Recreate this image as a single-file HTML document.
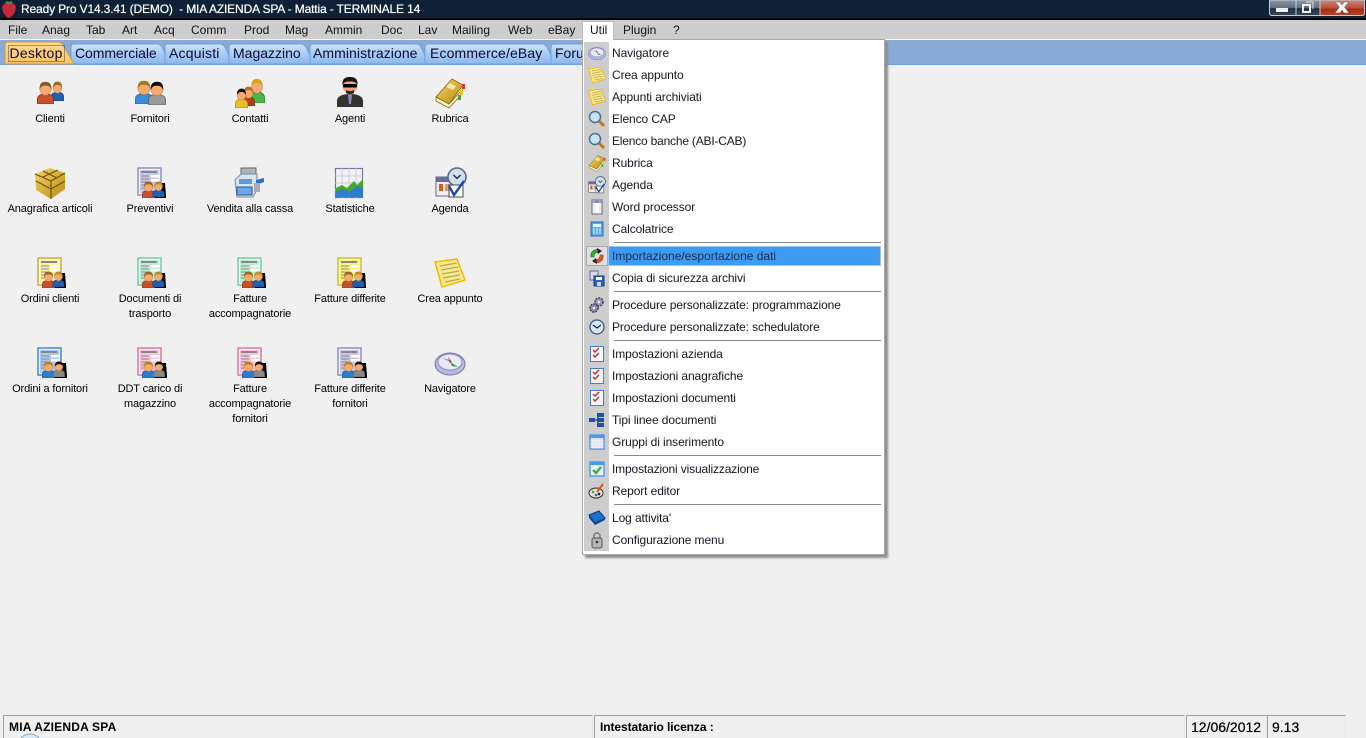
<!DOCTYPE html>
<html lang="it"><head><meta charset="utf-8"><title>Ready Pro</title>
<style>
html,body{margin:0;padding:0;width:1366px;height:738px;overflow:hidden;background:#f0f0f0}
body{font-family:"Liberation Sans",sans-serif;font-size:12px;color:#000;position:relative}
div,span,svg{position:absolute}
.t{white-space:pre}
#title{left:0;top:0;width:1366px;height:18px;background:#0e2136}
#title .t{left:21px;top:2px;color:#fff;font-size:12px;line-height:15px;font-weight:400;letter-spacing:-.145px;text-shadow:0 0 .6px #fff}
#line{left:0;top:18px;width:1366px;height:2px;background:#000}
#menu{left:0;top:20px;width:1366px;height:19px;background:#cdcdcd}
#menu .t{top:3px;line-height:14px;color:#111}
#wl{left:0;top:39px;width:1366px;height:1px;background:#f4f6f8}
#tabs{left:0;top:40px;width:1366px;height:24px;background:#89a9d7}
#bl{left:0;top:64px;width:1366px;height:1px;background:#6f9fdd}
.tl{top:45px;font-size:14px;line-height:17px;color:#0c0c2a}
.lab{width:100px;text-align:center;font-size:11px;line-height:15px;color:#000;letter-spacing:-.14px}
.ico{width:32px;height:32px}
#pop{left:582px;top:39px;width:301px;height:514px;background:#fff;border:1px solid #a8a8a8;box-shadow:3px 3px 2px #8e8e8e}
#gut{left:584px;top:42px;width:25px;height:509px;background:#cdcdcd}
.mi{left:612px;line-height:14px;color:#15151f;letter-spacing:-.1px;white-space:pre}
.sep{left:614px;width:267px;height:1px;background:#8a8a8a}
.mic{left:588px;width:18px;height:18px}
.sb{top:715px;height:23px;border-top:1px solid #a0a0a0;border-left:1px solid #a0a0a0;border-right:1px solid #e6e6e6}
.sbt{top:720px;line-height:14px;white-space:pre;color:#000}
</style></head><body>
<svg width="0" height="0" style="left:0;top:0">
<defs>
<linearGradient id="gold" x1="0" y1="0" x2="1" y2="1"><stop offset="0" stop-color="#f5d560"/><stop offset="1" stop-color="#b98a12"/></linearGradient>
<linearGradient id="tabg" x1="0" y1="0" x2="0" y2="1"><stop offset="0" stop-color="#cfe3fb"/><stop offset=".45" stop-color="#a9ccf6"/><stop offset="1" stop-color="#8fb8ee"/></linearGradient>
<linearGradient id="tabo" x1="0" y1="0" x2="0" y2="1"><stop offset="0" stop-color="#ffd88f"/><stop offset="1" stop-color="#ffc465"/></linearGradient>
<symbol id="man" viewBox="0 0 20 24" preserveAspectRatio="none"><path d="M.5 24V19C.5 15 5 13.500 10 13.500s9.500 1.500 9.500 5.500v5z" fill="var(--s,#c8502a)" stroke="var(--d,#7a2a12)" stroke-width=".8"/><circle cx="10" cy="8" r="6.800" fill="#f5ab70" stroke="#a86a32" stroke-width=".5"/><path d="M3.200 9C2.500 2.500 6 .8 10 .8S17.500 2.500 16.800 9C15.500 5.500 13 4.800 10 4.800S4.500 5.500 3.200 9z" fill="var(--h,#b87a2a)"/></symbol>
<symbol id="doc" viewBox="0 0 32 32"><rect x="1" y="1" width="23" height="27" fill="#f4f4ee" stroke="var(--b)" stroke-width="1.400"/><rect x="3" y="3" width="19" height="23" fill="var(--l)"/><rect x="4" y="4" width="16" height="2" fill="#888"/><path d="M4 9h8M4 12h8M4 15h6M4 18h4M4 21h3" stroke="#888" stroke-width="1"/><rect x="14" y="8" width="8" height="2.500" fill="#fff"/><rect x="14" y="12" width="8" height="2.500" fill="#fff"/></symbol>
<symbol id="d1" viewBox="0 0 32 32"><use href="#doc" width="32" height="32"/><path d="M24 16h4l1 13v2H17v-3z" fill="#000"/><use href="#man" x="5" y="14" width="13" height="17" style="--s:#c8502a;--h:#9a6a22"/><use href="#man" x="15.500" y="14" width="12" height="16" style="--s:#1c62b4;--d:#0d3a78;--h:#b88a2a"/></symbol>
<symbol id="d2" viewBox="0 0 32 32"><use href="#doc" width="32" height="32"/><path d="M24 16h5l1 13v2H17v-3z" fill="#000"/><use href="#man" x="5" y="14" width="13" height="17" style="--s:#2a7ed0;--d:#124a88;--h:#b8801e"/><use href="#man" x="16" y="14" width="12" height="16" style="--s:#8a8a8a;--d:#555;--h:#151515"/></symbol>
<symbol id="book" viewBox="0 0 32 32"><path d="M2 20L15 27 28 13 28 17 15 31 2 24z" fill="#fff3cc" stroke="#8a6410" stroke-width=".8"/><path d="M2 20L18 2 29 8 15 27z" fill="url(#gold)" stroke="#8a6410" stroke-width=".8"/><path d="M15 6l7 3-3 4-7-3z" fill="#f3e6ac"/><rect x="28" y="7" width="3" height="5" fill="#e23a20"/><rect x="26" y="13" width="3" height="5" fill="#e8c820"/><rect x="24" y="18" width="3" height="5" fill="#4aa83a"/></symbol>
<symbol id="note" viewBox="0 0 32 32"><path d="M1 5L23 2 31 23 8 30z" fill="#fbe98a" stroke="#f0b400" stroke-width="1.400"/><path d="M6 9l17-3M7 13l17-3M8 17l17-3M9 21l17-3M11 25l15-3" stroke="#b8a45a" stroke-width="1.300"/></symbol>
<symbol id="comp" viewBox="0 0 32 32"><ellipse cx="16" cy="17" rx="15" ry="11" fill="#b8b8e4" stroke="#7474b0"/><ellipse cx="16" cy="15" rx="12" ry="8" fill="#e8e8f6" stroke="#8c8cc4"/><path d="M8 11L17 15 15 13z" fill="#3a6ac0"/><path d="M14 10l4 5-2 1z" fill="#d8402a"/><path d="M16 15l8 5-6-1z" fill="#3a9a4a"/></symbol>
<symbol id="zoom" viewBox="0 0 18 18"><path d="M10 10l6 6" stroke="#c87818" stroke-width="3"/><circle cx="7" cy="7" r="5.500" fill="#c8e4f8" stroke="#47708f" stroke-width="1.500"/></symbol>
<symbol id="chk" viewBox="0 0 18 18"><rect x="2.500" y="1.500" width="13" height="15" fill="#f6f6fa" stroke="#4a7ac8"/><path d="M5 5l2 2 4-4M5 10l2 2 4-4" fill="none" stroke="#c82a20" stroke-width="1.400"/></symbol>
<symbol id="agenda" viewBox="0 0 32 32"><rect x="1" y="10" width="19" height="19" fill="#eef" stroke="#667"/><rect x="1" y="10" width="19" height="5" fill="#6a6aa4"/><rect x="4" y="17" width="4" height="7" fill="#d8601a"/><rect x="10" y="17" width="5" height="7" fill="#e89a5a"/><circle cx="22" cy="10" r="9" fill="#cfe0f0" stroke="#5a6a8a" stroke-width="1.600"/><path d="M18.500 8l3.500 3.500L25.500 8" fill="none" stroke="#223" stroke-width="1.300"/><rect x="14" y="18" width="14" height="12" fill="#fff" stroke="#445"/><path d="M14 19l5 9 10-14" fill="none" stroke="#1c4ab0" stroke-width="2.400"/></symbol>
</defs></svg>

<div id="title"><span class="t">Ready Pro V14.3.41 (DEMO)  - MIA AZIENDA SPA - Mattia - TERMINALE 14</span></div>
<svg style="left:1px;top:0" width="16" height="18" viewBox="0 0 16 18"><path d="M8 18C3 16 .5 10 1.500 6 2.500 3 6 3 8 4c2-1 5.500-1 6.500 2 1 4-1.500 10-6.500 12z" fill="#c8283a"/><path d="M4 3l4 1 4-1-2-2-2 1-2-1z" fill="#4a9a3a"/></svg>

<svg style="left:1269px;top:0" width="96" height="17" viewBox="0 0 96 17">
<defs><linearGradient id="bg" x1="0" y1="0" x2="0" y2="1"><stop offset="0" stop-color="#8a97a4"/><stop offset=".5" stop-color="#5f6e7e"/><stop offset=".55" stop-color="#22303f"/><stop offset="1" stop-color="#34485a"/></linearGradient>
<linearGradient id="rg" x1="0" y1="0" x2="0" y2="1"><stop offset="0" stop-color="#c88a80"/><stop offset=".5" stop-color="#b8503c"/><stop offset=".6" stop-color="#b02810"/><stop offset="1" stop-color="#a84a30"/></linearGradient></defs>
<path d="M.5 0V13q0 2.500 2.500 2.500H51V0z" fill="url(#bg)" stroke="#c8ccd0"/>
<path d="M51 0H95.500V13q0 2.500-2.500 2.500H51z" fill="url(#rg)" stroke="#c8ccd0"/>
<line x1="27" y1="0" x2="27" y2="15" stroke="#c8ccd0"/>
<rect x="7" y="8" width="12" height="4" fill="#f0f0f0"/>
<rect x="34" y="5" width="7" height="7" fill="none" stroke="#f0f0f0" stroke-width="2"/><path d="M37 2h7v7" fill="none" stroke="#dde" stroke-width="1"/>
<path d="M66 2l5 0 2 3 2-3 5 0-4.500 5 4.500 6-5 0-2-3-2 3-5 0 4.500-6z" fill="#f2f2f2" stroke="#666" stroke-width=".5"/>
</svg>
<div id="line"></div>

<div id="menu">
<span class="t" style="left:8px">File</span><span class="t" style="left:42px">Anag</span><span class="t" style="left:86px">Tab</span><span class="t" style="left:122px">Art</span><span class="t" style="left:154px">Acq</span><span class="t" style="left:191px">Comm</span><span class="t" style="left:244px">Prod</span><span class="t" style="left:285px">Mag</span><span class="t" style="left:325px">Ammin</span><span class="t" style="left:381px">Doc</span><span class="t" style="left:418px">Lav</span><span class="t" style="left:452px">Mailing</span><span class="t" style="left:508px">Web</span><span class="t" style="left:548px">eBay</span><span class="t" style="left:623px">Plugin</span><span class="t" style="left:673px">?</span>
</div>
<div id="wl"></div>
<div id="tabs"></div><div id="bl"></div>

<svg style="left:0;top:40px" width="600" height="25" viewBox="0 0 600 25">
<path d="M71 24V7q0-3 3-3h83q3 0 5 3l8 17z" fill="url(#tabg)" stroke="#6f9fdd"/>
<path d="M165 24V7q0-3 3-3h52q3 0 5 3l8 17z" fill="url(#tabg)" stroke="#6f9fdd"/>
<path d="M229 24V7q0-3 3-3h69q3 0 5 3l8 17z" fill="url(#tabg)" stroke="#6f9fdd"/>
<path d="M310 24V7q0-3 3-3h103q3 0 5 3l8 17z" fill="url(#tabg)" stroke="#6f9fdd"/>
<path d="M425 24V7q0-3 3-3h114q3 0 5 3l8 17z" fill="url(#tabg)" stroke="#6f9fdd"/>
<path d="M551 24V7q0-3 3-3h40v20z" fill="url(#tabg)" stroke="#6f9fdd"/>
<path d="M5 24V5q0-3 3-3h50q3 0 5 3l11 19z" fill="url(#tabo)" stroke="#c89a50"/>
<rect x="8.500" y="5.500" width="56" height="16" fill="none" stroke="#444" stroke-dasharray="1 1"/>
</svg>
<span class="tl t" style="left:9.500px;letter-spacing:.25px">Desktop</span><span class="tl t" style="left:75px;letter-spacing:-.08px">Commerciale</span><span class="tl t" style="left:169px;letter-spacing:.2px">Acquisti</span><span class="tl t" style="left:233px">Magazzino</span><span class="tl t" style="left:313px;letter-spacing:.07px">Amministrazione</span><span class="tl t" style="left:430px;letter-spacing:.14px">Ecommerce/eBay</span><span class="tl t" style="left:555px">Forum</span>

<!-- Row 1 -->
<svg class="ico" style="left:36px;top:77px" viewBox="0 0 32 32"><use href="#man" x="15" y="4" width="13" height="20" style="--s:#1c62b4;--d:#0d3a78;--h:#9a6a22"/><use href="#man" x="1" y="4" width="17" height="23" style="--s:#c8502a;--h:#8a5a1e"/></svg>
<svg class="ico" style="left:134px;top:77px" viewBox="0 0 32 32"><use href="#man" x="1" y="3" width="18" height="24" style="--s:#3a8ed8;--d:#1c5a9a;--h:#a8781e"/><use href="#man" x="14" y="4" width="18" height="24" style="--s:#9a9a9a;--d:#555;--h:#101010"/></svg>
<svg class="ico" style="left:234px;top:76px" viewBox="0 0 32 32"><use href="#man" x="15" y="2" width="16" height="25" style="--s:#48b848;--d:#227a22;--h:#d8a020"/><use href="#man" x="8" y="10" width="13" height="20" style="--s:#b83a1e;--h:#a8781e"/><use href="#man" x="1" y="12" width="13" height="20" style="--s:#e8c020;--d:#987a10;--h:#101010"/></svg>
<svg class="ico" style="left:334px;top:76px" viewBox="0 0 32 32"><path d="M3 31v-6c0-5 6-7 13-7s13 2 13 7v6z" fill="#333"/><path d="M14 18h4l-1 10h-2z" fill="#8a8ac0"/><circle cx="16" cy="10" r="7.500" fill="#f2a878"/><path d="M8.500 9C8 2 12 1 16 1s8 1 7.500 8C22 6 20 5.500 16 5.500S10 6 8.500 9z" fill="#181818"/><rect x="9" y="8" width="14" height="3.500" rx="1" fill="#000"/><path d="M12 14q4 2 8 0v3q-4 3-8 0z" fill="#3a2a1a"/></svg>
<svg class="ico" style="left:434px;top:77px"><use href="#book" width="32" height="32"/></svg>
<!-- Row 2 -->
<svg class="ico" style="left:34px;top:167px" viewBox="0 0 32 32"><path d="M1 7L16 1l15 5v16L17 32 2 23z" fill="url(#gold)"/><path d="M1 7l16 7 14-8M17 14v18M9 4l14 7M2 14l15 8 14-8M24 3L9 10" fill="none" stroke="#6a4e10" stroke-width="1.100"/></svg>
<svg class="ico" style="left:137px;top:167px"><use href="#d1" width="32" height="32" style="--b:#8a8ac0;--l:#c8c8ec"/></svg>
<svg class="ico" style="left:234px;top:167px" viewBox="0 0 32 32"><rect x="7" y="1" width="15" height="7" fill="#b4b4b4" stroke="#666"/><path d="M1 13l6-6h16v16l-4 7H3z" fill="#d8e4f0" stroke="#7a8a9a"/><path d="M5 12h13v5H5z" fill="#5a9ad8"/><path d="M3 20h15v8H3z" fill="#6aa8e8" stroke="#2a5a9a"/><path d="M22 13l8-2v4l-8 3z" fill="#2a72c0"/><rect x="20" y="16" width="6" height="9" fill="#aab"/></svg>
<svg class="ico" style="left:334px;top:167px" viewBox="0 0 32 32"><rect x="1.500" y="1.500" width="27" height="29" fill="#f2f2f2" stroke="#7474a4" stroke-width="1.200"/><path d="M1 9h28M1 16h28M1 23h28M8 1v30M15 1v30M22 1v30" stroke="#c4c4d4" stroke-width=".8"/><path d="M2 30V21l6-3 5 3 7-7 3 4 6-6v18z" fill="#42a832"/><path d="M2 30v-5l7-3 7 3 7-6 6 2v9z" fill="#2e7cd0"/></svg>
<svg class="ico" style="left:435px;top:167px"><use href="#agenda" width="32" height="32"/></svg>
<!-- Row 3 -->
<svg class="ico" style="left:37px;top:257px"><use href="#d1" width="32" height="32" style="--b:#c8a838;--l:#fdf2a8"/></svg>
<svg class="ico" style="left:137px;top:257px"><use href="#d1" width="32" height="32" style="--b:#72c8a0;--l:#bdeed4"/></svg>
<svg class="ico" style="left:237px;top:257px"><use href="#d1" width="32" height="32" style="--b:#72c8a0;--l:#bdeed4"/></svg>
<svg class="ico" style="left:337px;top:257px"><use href="#d1" width="32" height="32" style="--b:#c8c020;--l:#fbf47a"/></svg>
<svg class="ico" style="left:434px;top:257px"><use href="#note" width="32" height="32"/></svg>
<!-- Row 4 -->
<svg class="ico" style="left:37px;top:347px"><use href="#d2" width="32" height="32" style="--b:#3a7ae8;--l:#a8c8fa"/></svg>
<svg class="ico" style="left:137px;top:347px"><use href="#d2" width="32" height="32" style="--b:#d870a0;--l:#f8c4dc"/></svg>
<svg class="ico" style="left:237px;top:347px"><use href="#d2" width="32" height="32" style="--b:#d870a0;--l:#f8c4dc"/></svg>
<svg class="ico" style="left:337px;top:347px"><use href="#d2" width="32" height="32" style="--b:#8a8ac0;--l:#c8c8ec"/></svg>
<svg class="ico" style="left:434px;top:347px"><use href="#comp" width="32" height="32"/></svg>

<div class="lab" style="left:0;top:112px">Clienti</div><div class="lab" style="left:100px;top:112px">Fornitori</div><div class="lab" style="left:200px;top:112px">Contatti</div><div class="lab" style="left:300px;top:112px">Agenti</div><div class="lab" style="left:400px;top:112px">Rubrica</div>
<div class="lab" style="left:0;top:202px">Anagrafica articoli</div><div class="lab" style="left:100px;top:202px">Preventivi</div><div class="lab" style="left:200px;top:202px">Vendita alla cassa</div><div class="lab" style="left:300px;top:202px">Statistiche</div><div class="lab" style="left:400px;top:202px">Agenda</div>
<div class="lab" style="left:0;top:292px">Ordini clienti</div><div class="lab" style="left:100px;top:292px">Documenti di<br>trasporto</div><div class="lab" style="left:200px;top:292px">Fatture<br>accompagnatorie</div><div class="lab" style="left:300px;top:292px">Fatture differite</div><div class="lab" style="left:400px;top:292px">Crea appunto</div>
<div class="lab" style="left:0;top:382px">Ordini a fornitori</div><div class="lab" style="left:100px;top:382px">DDT carico di<br>magazzino</div><div class="lab" style="left:200px;top:382px">Fatture<br>accompagnatorie<br>fornitori</div><div class="lab" style="left:300px;top:382px">Fatture differite<br>fornitori</div><div class="lab" style="left:400px;top:382px">Navigatore</div>

<!-- Util popup -->
<div id="pop"></div><div id="gut"></div>
<div style="left:582px;top:21px;width:32px;height:19px;background:#fff;border:1px solid #bbb;border-bottom:0;box-sizing:border-box"></div>
<span class="t" style="left:590px;top:23px;line-height:14px;color:#111">Util</span>

<div style="left:586px;top:246px;width:22px;height:20px;background:#e0e0e0;border:1px solid #a8a8a8;box-sizing:border-box"></div>
<div style="left:608px;top:246px;width:273px;height:20px;background:#3d9bf3;box-sizing:border-box;border:1px solid #9cc8f0"></div>

<div class="sep" style="top:242px"></div><div class="sep" style="top:291px"></div><div class="sep" style="top:340px"></div><div class="sep" style="top:455px"></div><div class="sep" style="top:504px"></div>

<span class="mi" style="top:46px">Navigatore</span>
<span class="mi" style="top:68px">Crea appunto</span>
<span class="mi" style="top:90px">Appunti archiviati</span>
<span class="mi" style="top:112px">Elenco CAP</span>
<span class="mi" style="top:134px;letter-spacing:-.2px">Elenco banche (ABI-CAB)</span>
<span class="mi" style="top:156px">Rubrica</span>
<span class="mi" style="top:178px">Agenda</span>
<span class="mi" style="top:200px">Word processor</span>
<span class="mi" style="top:222px">Calcolatrice</span>
<span class="mi" style="top:249px;color:#1a2a50;letter-spacing:0">Importazione/esportazione dati</span>
<span class="mi" style="top:271px">Copia di sicurezza archivi</span>
<span class="mi" style="top:298px">Procedure personalizzate: programmazione</span>
<span class="mi" style="top:320px">Procedure personalizzate: schedulatore</span>
<span class="mi" style="top:347px">Impostazioni azienda</span>
<span class="mi" style="top:369px">Impostazioni anagrafiche</span>
<span class="mi" style="top:391px">Impostazioni documenti</span>
<span class="mi" style="top:413px">Tipi linee documenti</span>
<span class="mi" style="top:435px">Gruppi di inserimento</span>
<span class="mi" style="top:462px;letter-spacing:-.15px">Impostazioni visualizzazione</span>
<span class="mi" style="top:484px">Report editor</span>
<span class="mi" style="top:511px">Log attivita'</span>
<span class="mi" style="top:533px">Configurazione menu</span>

<svg class="mic" style="top:44px"><use href="#comp" width="18" height="18"/></svg>
<svg class="mic" style="top:66px"><use href="#note" width="18" height="18"/></svg>
<svg class="mic" style="top:88px"><use href="#note" width="18" height="18"/></svg>
<svg class="mic" style="top:110px"><use href="#zoom" width="18" height="18"/></svg>
<svg class="mic" style="top:132px"><use href="#zoom" width="18" height="18"/></svg>
<svg class="mic" style="top:154px"><use href="#book" width="18" height="18"/></svg>
<svg class="mic" style="top:176px"><use href="#agenda" width="18" height="18"/></svg>
<svg class="mic" style="top:198px" viewBox="0 0 18 18"><rect x="4" y="2" width="10" height="14" fill="#fff" stroke="#667"/><rect x="4" y="2" width="10" height="3" fill="#8a8ab4"/><path d="M6 2v14M12 2v14" stroke="#ccd" stroke-width=".8"/></svg>
<svg class="mic" style="top:220px" viewBox="0 0 18 18"><rect x="3" y="2" width="12" height="14" fill="#5aa8e8" stroke="#2a6ab0"/><rect x="5" y="4" width="8" height="3" fill="#dff"/><path d="M5 9h8M5 11h8M5 13h8" stroke="#eef" stroke-width="1" stroke-dasharray="2 1"/></svg>
<svg class="mic" style="top:247px" viewBox="0 0 18 18"><path d="M3 10C2 4 8 1 12 3l-2 3c-2-1-4 0-4 4z" fill="#3aa83a" stroke="#136a13" stroke-width=".6"/><path d="M15 8c1 6-5 9-9 7l2-3c2 1 4 0 4-4z" fill="#e85a1e" stroke="#8a2a10" stroke-width=".6"/><path d="M9 1l5 3-4 3zM9 17l-5-3 4-3z" fill="#222"/></svg>
<svg class="mic" style="top:269px" viewBox="0 0 18 18"><rect x="2" y="2" width="8" height="9" fill="#d8d8ec" stroke="#5a6a9a"/><rect x="6" y="7" width="10" height="10" fill="#2a62b4" stroke="#123a7a"/><rect x="8" y="8" width="6" height="3" fill="#fff"/><rect x="9" y="13" width="4" height="4" fill="#ccd"/></svg>
<svg class="mic" style="top:296px" viewBox="0 0 18 18"><circle cx="11" cy="6" r="4" fill="#9a9ac4" stroke="#445" stroke-width="1.600" stroke-dasharray="2 1"/><circle cx="6" cy="12" r="4" fill="#8a8ab4" stroke="#445" stroke-width="1.600" stroke-dasharray="2 1"/><circle cx="6" cy="12" r="1.300" fill="#eef"/><circle cx="11" cy="6" r="1.200" fill="#eef"/></svg>
<svg class="mic" style="top:318px" viewBox="0 0 18 18"><circle cx="9" cy="9" r="7" fill="#d4e8f8" stroke="#3a5a7a" stroke-width="1.300"/><path d="M5 7l4 3 4-3" fill="none" stroke="#223" stroke-width="1.200"/></svg>
<svg class="mic" style="top:345px"><use href="#chk" width="18" height="18"/></svg>
<svg class="mic" style="top:367px"><use href="#chk" width="18" height="18"/></svg>
<svg class="mic" style="top:389px"><use href="#chk" width="18" height="18"/></svg>
<svg class="mic" style="top:411px" viewBox="0 0 18 18"><path d="M5 9h5M10 4v10" stroke="#123" fill="none"/><rect x="1" y="7" width="6" height="4" fill="#1c52a8"/><rect x="9" y="2" width="7" height="4" fill="#1c52a8"/><rect x="9" y="7" width="7" height="4" fill="#1c52a8"/><rect x="9" y="12" width="7" height="4" fill="#1c52a8"/></svg>
<svg class="mic" style="top:433px" viewBox="0 0 18 18"><rect x="2" y="2" width="14" height="14" fill="#dcdcf4" stroke="#3a8ae8" stroke-width="1.200"/><rect x="2" y="2" width="14" height="3" fill="#4a9af0"/><path d="M5 5v11M8 5v11M11 5v11M14 5v11M2 8h14M2 11h14M2 14h14" stroke="#fff" stroke-width=".6"/></svg>
<svg class="mic" style="top:460px" viewBox="0 0 18 18"><rect x="2" y="2" width="14" height="14" fill="#e8eef8" stroke="#3a8ae8" stroke-width="1.200"/><rect x="2" y="2" width="14" height="3" fill="#4a9af0"/><path d="M5 10l3 3 5-6" fill="none" stroke="#3aa83a" stroke-width="2.200"/></svg>
<svg class="mic" style="top:482px" viewBox="0 0 18 18"><ellipse cx="8" cy="11" rx="7" ry="5" fill="#e8e2c8" stroke="#333"/><circle cx="5" cy="10" r="1.300" fill="#3a3"/><circle cx="8" cy="13" r="1.300" fill="#36c"/><circle cx="11" cy="12" r="1.300" fill="#222"/><path d="M9 10l6-8" stroke="#e8501a" stroke-width="2"/></svg>
<svg class="mic" style="top:509px" viewBox="0 0 18 18"><path d="M1 6l10-4 6 7-10 5z" fill="#1c72c8" stroke="#0d3a78"/><path d="M1 6v3l6 7 10-5V9L7 14z" fill="#0d4a9a"/></svg>
<svg class="mic" style="top:531px" viewBox="0 0 18 18"><path d="M6 8V5a3 3 0 0 1 6 0v3" fill="none" stroke="#777" stroke-width="1.500"/><rect x="4" y="7" width="10" height="10" rx="2" fill="#b4b4b8" stroke="#555"/><circle cx="9" cy="11" r="1.300" fill="#333"/></svg>

<!-- Status bar -->
<div class="sb" style="left:3px;width:588px"></div>
<div class="sb" style="left:594px;width:589px"></div>
<div class="sb" style="left:1186px;width:79px"></div>
<div class="sb" style="left:1267px;width:77px"></div>
<span class="sbt" style="left:9px;font-weight:700;font-size:12px;letter-spacing:.2px">MIA AZIENDA SPA</span>
<span class="sbt" style="left:600px;font-weight:700;font-size:12px;letter-spacing:-.08px">Intestatario licenza :</span>
<span class="sbt" style="left:1191px;font-size:14px;text-shadow:0 0 .5px #000">12/06/2012</span>
<span class="sbt" style="left:1272px;font-size:14px;text-shadow:0 0 .5px #000">9.13</span>
<svg style="left:14px;top:733px" width="30" height="5"><circle cx="16" cy="13" r="12" fill="#d8e8f4" stroke="#8aa8c0"/></svg>
</body></html>
